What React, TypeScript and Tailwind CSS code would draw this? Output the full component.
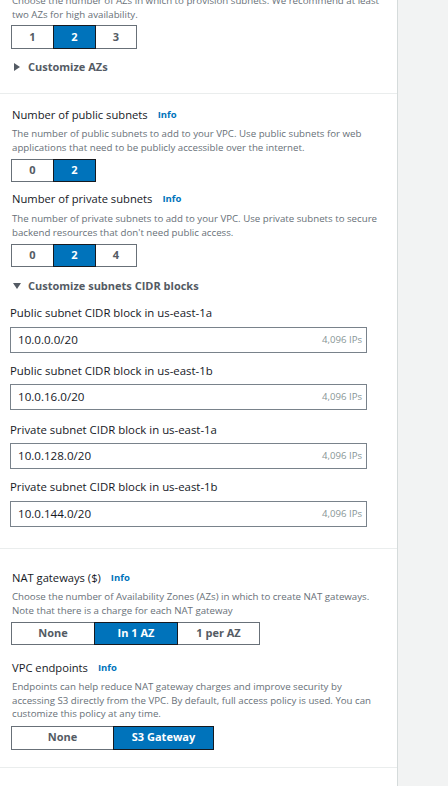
import type { ReactNode } from "react";

const FONT = { fontFamily: '"Open Sans", "Noto Sans", Arial, sans-serif' };

type SegProps = { options: string[]; selected: number; widths: string[]; height: string };

function Segmented({ options, selected, widths, height }: SegProps) {
  return (
    <div className={`flex ${height}`}>
      {options.map((opt, i) => {
        const active = i === selected;
        return (
          <div
            key={opt}
            className={`${widths[i]} flex items-center justify-center border text-[11px] font-bold ${
              i > 0 ? "-ml-px" : ""
            } ${active ? "relative z-10 border-[#16191f] bg-[#0073bb] text-white" : "border-[#687078] bg-white text-[#545b64]"}`}
          >
            {opt}
          </div>
        );
      })}
    </div>
  );
}

function Title({ children, className = "" }: { children: ReactNode; className?: string }) {
  return (
    <div className={`flex items-center gap-[10px] text-[11.2px] leading-[18px] text-[#16191f] ${className}`}>
      <span>{children}</span>
      <span className="text-[9.5px] font-bold text-[#0073bb]">Info</span>
    </div>
  );
}

function Desc({ children, className = "" }: { children: ReactNode; className?: string }) {
  return <p className={`text-[9.7px] leading-[13.5px] text-[#687078] ${className}`}>{children}</p>;
}

function Expander({ open, label, className = "" }: { open: boolean; label: string; className?: string }) {
  return (
    <div className={`flex items-center gap-[7px] text-[11px] font-bold leading-4 text-[#545b64] ${className}`}>
      <svg width="8" height="8" viewBox="0 0 8 8" className="ml-px">
        {open ? <path d="M0 1h8L4 7z" fill="#545b64" /> : <path d="M1 0v8l6-4z" fill="#545b64" />}
      </svg>
      <span>{label}</span>
    </div>
  );
}

function CidrField({ label, value, labelMt, inputMt }: { label: string; value: string; labelMt: string; inputMt: string }) {
  return (
    <>
      <div className={`${labelMt} text-[11.4px] leading-4 text-[#16191f]`}>{label}</div>
      <div className={`${inputMt} flex h-[26px] w-[357px] items-center justify-between border border-[#79828b] pl-[7px] pr-[4px]`}>
        <span className="text-[11.6px] text-[#16191f]">{value}</span>
        <span className="text-[9.6px] text-[#879596]">4,096 IPs</span>
      </div>
    </>
  );
}

export default function App() {
  return (
    <div className="flex h-[786px] overflow-hidden" style={FONT}>
      <main className="w-[398px] shrink-0 border-r border-[#d5dbdb] bg-white">
        <section className="border-b border-[#eaeded] pb-[18px] pl-[12px]">
          <Desc className="-mt-[6px]">
            Choose the number of AZs in which to provision subnets. We recommend at least
            <br />
            two AZs for high availability.
          </Desc>
          <div className="mt-[4px] -ml-px">
            <Segmented options={["1", "2", "3"]} selected={1} widths={["w-[43px]", "w-[43px]", "w-[42px]"]} height="h-[24px]" />
          </div>
          <Expander open={false} label="Customize AZs" className="mt-[10px]" />
        </section>

        <section className="border-b border-[#eaeded] pb-[21px] pl-[12px] pt-[12px]">
          <Title>Number of public subnets</Title>
          <Desc className="mt-[3px]">
            The number of public subnets to add to your VPC. Use public subnets for web
            <br />
            applications that need to be publicly accessible over the internet.
          </Desc>
          <div className="mt-[5px] -ml-px">
            <Segmented options={["0", "2"]} selected={1} widths={["w-[43px]", "w-[43px]"]} height="h-[23px]" />
          </div>
          <Title className="mt-[8px]">Number of private subnets</Title>
          <Desc className="mt-[4px]">
            The number of private subnets to add to your VPC. Use private subnets to secure
            <br />
            backend resources that don't need public access.
          </Desc>
          <div className="mt-[5px] -ml-px">
            <Segmented options={["0", "2", "4"]} selected={1} widths={["w-[43px]", "w-[43px]", "w-[42px]"]} height="h-[23px]" />
          </div>
          <Expander open label="Customize subnets CIDR blocks" className="mt-[11px]" />
          <div className="-ml-[2px]">
            <CidrField label="Public subnet CIDR block in us-east-1a" value="10.0.0.0/20" labelMt="mt-[11px]" inputMt="mt-[6px]" />
            <CidrField label="Public subnet CIDR block in us-east-1b" value="10.0.16.0/20" labelMt="mt-[10px]" inputMt="mt-[5px]" />
            <CidrField label="Private subnet CIDR block in us-east-1a" value="10.0.128.0/20" labelMt="mt-[12px]" inputMt="mt-[5px]" />
            <CidrField label="Private subnet CIDR block in us-east-1b" value="10.0.144.0/20" labelMt="mt-[10px]" inputMt="mt-[6px]" />
          </div>
        </section>

        <section className="border-b border-[#eaeded] pb-[17px] pl-[12px] pt-[20px]">
          <Title>NAT gateways ($)</Title>
          <Desc className="mt-[3px]">
            Choose the number of Availability Zones (AZs) in which to create NAT gateways.
            <br />
            Note that there is a charge for each NAT gateway
          </Desc>
          <div className="mt-[5px] -ml-px">
            <Segmented
              options={["None", "In 1 AZ", "1 per AZ"]}
              selected={1}
              widths={["w-[84px]", "w-[84px]", "w-[83px]"]}
              height="h-[23px]"
            />
          </div>
          <Title className="mt-[14px]">VPC endpoints</Title>
          <Desc className="mt-[3px]">
            Endpoints can help reduce NAT gateway charges and improve security by
            <br />
            accessing S3 directly from the VPC. By default, full access policy is used. You can
            <br />
            customize this policy at any time.
          </Desc>
          <div className="mt-[5px] -ml-px">
            <Segmented options={["None", "S3 Gateway"]} selected={1} widths={["w-[103px]", "w-[101px]"]} height="h-[24px]" />
          </div>
        </section>
      </main>
      <aside className="flex-1 bg-[#f2f3f3]" />
    </div>
  );
}
